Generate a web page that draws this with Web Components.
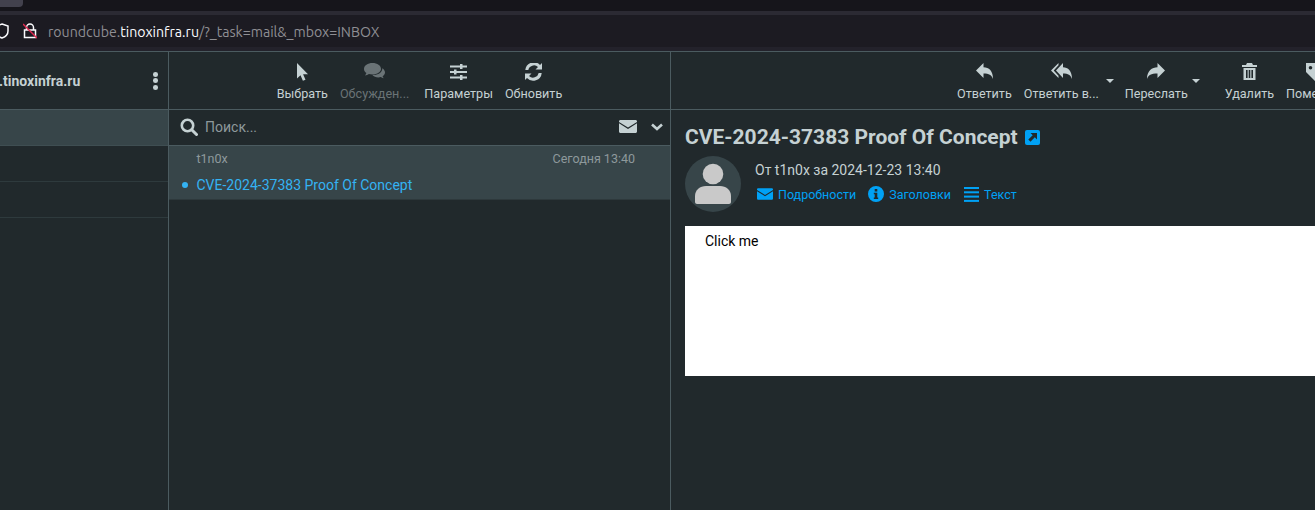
<!DOCTYPE html>
<html>
<head>
<meta charset="utf-8">
<style>
  html, body { margin: 0; height: 100%; overflow: hidden; background: #21292c; }
  body { display: flex; flex-direction: column; width: 1315px; height: 510px; font-family: Roboto, sans-serif; }
</style>
</head>
<body>
<browser-bar></browser-bar>
<mail-layout>
  <folder-pane slot="folders"></folder-pane>
  <list-pane slot="list"></list-pane>
  <message-pane slot="message"></message-pane>
</mail-layout>

<script>
const ICONS = {
  select: `<path fill="currentColor" d="M1 0v15.500l3.500-3.300 2.400 5.600 2.600-1.100-2.400-5.500H12z"/>`,
  threads: `<path fill="currentColor" d="M8.500 0C3.800 0 0 2.600 0 5.900c0 1.600.9 3 2.400 4.100-.2.900-.8 1.700-1.500 2.400 1.500-.1 2.900-.7 4-1.500 1 .3 2.200.5 3.600.5 4.700 0 8.500-2.600 8.500-5.500C17 2.600 13.200 0 8.500 0z"/><path fill="currentColor" d="M18.300 5.200c.1 3.900-4 6.900-9.300 6.900h-.6c1.300 1.400 3.500 2.300 5.900 2.300.9 0 1.700-.1 2.500-.3.800.6 1.800 1 3 1.100-.6-.6-1-1.200-1.200-1.900 1.500-.9 2.400-2.200 2.400-3.700 0-1.800-1.100-3.400-2.700-4.400z"/>`,
  options: `<g fill="currentColor"><rect y="2.500" width="17" height="2"/><rect y="8" width="17" height="2"/><rect y="13.500" width="17" height="2"/><rect x="10" y="1" width="2.500" height="5"/><rect x="4" y="6.500" width="2.500" height="5"/><rect x="10" y="12" width="2.500" height="5"/></g>`,
  refresh: `<path fill="currentColor" d="M17 0v6.500h-6.500L13 4A5.800 5.800 0 0 0 3.300 7H.3A8.500 8.500 0 0 1 15 2zM0 17v-6.500h6.500L4 13a5.800 5.800 0 0 0 9.700-3h3A8.500 8.500 0 0 1 2 15z"/>`,
  reply: `<path fill="currentColor" d="M7.500 0v4.200C13 4.400 17 7.500 17 16c-1.300-3.800-4-5.500-9.500-5.500V15L0 7.500z"/>`,
  replyall: `<path fill="currentColor" d="M12 0v4.200C17 4.400 21 7.500 21 16c-1.300-3.800-3.800-5.500-9-5.500V15L5 7.500z"/><path fill="currentColor" d="M7.500 0 0 7.500 7.500 15v-2.300L2.700 7.500 7.500 2.300z"/>`,
  forward: `<path fill="currentColor" d="M10.500 0v4.200C5 4.400 0 7.500 0 16c1.300-3.800 4-5.500 10.500-5.500V15L18 7.500z"/>`,
  trash: `<path fill="currentColor" d="M5 0h5l1 2h4v2H0V2h4zM1.500 5h12v12h-12zM4 7v8h1.600V7zm2.700 0v8h1.600V7zm2.700 0v8H11V7z"/>`,
  tag: `<path fill="currentColor" d="M0 0h9l10 10-9 9L0 9zm4.500 3A1.800 1.800 0 1 0 4.500 6.600 1.800 1.800 0 0 0 4.500 3z"/>`,
  mail: `<path fill="currentColor" d="M1.500 0h15c.8 0 1.500.6 1.500 1.400v.5L9 7.500 0 1.900v-.5C0 .6.700 0 1.500 0zM0 3.300l9 5.600 9-5.600V11.500c0 .8-.7 1.500-1.500 1.500h-15C.7 13 0 12.300 0 11.500z"/>`,
  info: `<path fill="currentColor" fill-rule="evenodd" d="M8 0a8 8 0 1 1 0 16A8 8 0 0 1 8 0zM6.700 3v2.500h2.600V3zM5.800 6.800v1.500h.9v3.200h-.9V13h4.400v-1.500h-.9V6.800z"/>`,
  text: `<g fill="currentColor"><rect width="15" height="2"/><rect y="4.300" width="15" height="2"/><rect y="8.600" width="15" height="2"/><rect y="12.900" width="15" height="2"/></g>`,
};

// small helper, every element below just renders its own html once
class Base extends HTMLElement {
  render(html) {
    this.attachShadow({ mode: "open" }).innerHTML = html;
  }
}

class BrowserBar extends Base {
  connectedCallback() {
    this.render(`
    <style>
      :host { display: block; height: 52px; flex: none; background: #23222b; box-sizing: border-box; border-bottom: 1px solid #4b5b60; }
      .tabs { height: 11px; background: #16151b; }
      .tab { width: 23px; height: 7px; background: #42414d; border-radius: 0 0 4px 0; }
      .strip { height: 4px; background: #2b2a33; }
      .url { height: 32px; display: flex; align-items: center; background: #1c1b22; font: 14.150px Ubuntu, "Open Sans", sans-serif; color: #8f8f94; }
      .url b { font-weight: 400; color: #fbfbfe; }
      .url span { position: relative; top: 1px; }
      svg { flex: none; display: block; }
      .shield { margin-left: -5px; }
      .lock { margin: 0 11px 0 14px; }
    </style>
    <div class="tabs"><div class="tab"></div></div>
    <div class="strip"></div>
    <div class="url">
      <svg class="shield" width="14" height="16" viewBox="0 0 14 16"><path fill="none" stroke="#fbfbfe" stroke-width="1.500" d="M7 1l6 2v5c0 3.500-2.500 5.800-6 7-3.500-1.200-6-3.500-6-7V3z"/></svg>
      <svg class="lock" width="14" height="16" viewBox="0 0 14 16"><path fill="none" stroke="#fbfbfe" stroke-width="1.500" d="M3.500 7V4.500a3.500 3.500 0 0 1 7 0V7M1.500 7h11v7.500h-11z"/><path stroke="#e22850" stroke-width="1.500" d="M0 1l14 14"/></svg>
      <span>roundcube.<b>tinoxinfra.ru</b>/?_task=mail&amp;_mbox=INBOX</span>
    </div>`);
  }
}

class MailLayout extends Base {
  connectedCallback() {
    this.render(`
    <style>
      :host { display: grid; grid-template-columns: 169px 502px 1fr; flex: 1; min-height: 0; }
    </style>
    <slot name="folders"></slot><slot name="list"></slot><slot name="message"></slot>`);
  }
}

class ToolButton extends Base {
  connectedCallback() {
    const icon = this.getAttribute("icon");
    const w = this.getAttribute("iw") || 17;
    const vb = this.getAttribute("vb") || `0 0 ${w} 18`;
    this.render(`
    <style>
      :host { display: flex; flex-direction: column; align-items: center; position: relative; font-size: 12.600px; color: #c5d1d3; flex: none; white-space: nowrap; }
      :host([disabled]) { color: #6a7376; }
      svg { display: block; margin: 1px 0 5px; height: 18px; width: ${w}px; }
      :host([drop])::after { content: ""; position: absolute; right: var(--drop, -15px); top: 17px; border: 4px solid transparent; border-top: 4px solid #c5d1d3; border-bottom: 0; }
    </style>
    <svg viewBox="${vb}">${ICONS[icon]}</svg><slot></slot>`);
  }
}
customElements.define("tool-button", ToolButton);

class FolderPane extends Base {
  connectedCallback() {
    this.render(`
    <style>
      :host { display: block; border-right: 1px solid #4b5b60; height: 458px; }
      .head { height: 58px; box-sizing: border-box; border-bottom: 1px solid #4b5b60; display: flex; align-items: center; justify-content: space-between; color: #c5d1d3; font-size: 14px; font-weight: 700; }
      .head span { margin-left: -1px; }
      .dots { margin-right: 10px; display: flex; flex-direction: column; gap: 1.500px; }
      .dots i { width: 5.500px; height: 5px; border-radius: 50%; background: #c5d1d3; }
      .row { height: 36px; box-sizing: border-box; border-bottom: 1px solid #2e3a3d; }
      .row.sel { background: #374549; border-bottom-color: #3f4e52; }
    </style>
    <div class="head"><span>.tinoxinfra.ru</span><div class="dots"><i></i><i></i><i></i></div></div>
    <div class="row sel"></div><div class="row"></div><div class="row"></div>`);
  }
}

class ListPane extends Base {
  connectedCallback() {
    this.render(`
    <style>
      :host { display: block; border-right: 1px solid #4b5b60; height: 458px; }
      .tools { height: 58px; box-sizing: border-box; border-bottom: 1px solid #4b5b60; display: flex; justify-content: center; gap: 12px; padding: 10px 0 0 0; }
      .search { height: 36px; box-sizing: border-box; border-bottom: 1px solid #4b5b60; display: flex; align-items: center; padding: 0 7px 2px 11px; color: #8e999c; font-size: 14px; }
      .search span { flex: 1; margin-left: 7px; }
      .search svg { display: block; color: #c5d1d3; }
      .chev { margin-left: 14px; }
      .msg { background: #374549; height: 54px; box-sizing: border-box; border-bottom: 1px solid #2e393c; padding: 5px 35px 0 27.500px; position: relative; }
      .top { display: flex; justify-content: space-between; font-size: 12.500px; color: #8e999c; }
      .subj { margin-top: 11px; font-size: 14px; color: #34b3f3; }
      .dot { position: absolute; left: 13px; top: 36px; width: 6px; height: 6px; border-radius: 50%; background: #34b3f3; }
    </style>
    <div class="tools">
      <tool-button icon="select" iw="12">Выбрать</tool-button>
      <tool-button icon="threads" disabled iw="22">Обсужден...</tool-button>
      <tool-button icon="options" style="margin-left:3px">Параметры</tool-button>
      <tool-button icon="refresh">Обновить</tool-button>
    </div>
    <div class="search">
      <svg width="18" height="18" viewBox="0 0 18 18"><circle cx="7.500" cy="7.500" r="5.700" fill="none" stroke="currentColor" stroke-width="2.600"/><path stroke="currentColor" stroke-width="3" stroke-linecap="round" d="M12 12l4.500 4.500"/></svg>
      <span>Поиск...</span>
      <svg width="18" height="13" viewBox="0 0 18 13">${ICONS.mail}</svg>
      <svg class="chev" width="12" height="8" viewBox="0 0 12 8"><path fill="none" stroke="currentColor" stroke-width="2.600" d="M1 1.500l5 4.500 5-4.500"/></svg>
    </div>
    <div class="msg">
      <div class="top"><span>t1n0x</span><span>Сегодня 13:40</span></div>
      <div class="subj">CVE-2024-37383 Proof Of Concept</div>
      <div class="dot"></div>
    </div>`);
  }
}

class MessagePane extends Base {
  connectedCallback() {
    this.render(`
    <style>
      :host { display: block; height: 458px; overflow: hidden; }
      .tools { height: 58px; box-sizing: border-box; border-bottom: 1px solid #4b5b60; display: flex; padding: 10px 0 0 286px; overflow: hidden; }
      .tools tool-button + tool-button { margin-left: 12px; }
      .body { padding: 13px 0 0 14px; }
      h1 { margin: 0; font-size: 21px; font-weight: 700; color: #c5d1d3; display: flex; align-items: center; gap: 7px; height: 28px; white-space: nowrap; }
      h1 svg { display: block; }
      .head { display: flex; margin-top: 5px; }
      .avatar { width: 56px; height: 56px; border-radius: 50%; background: #374549; flex: none; }
      .avatar svg { display: block; }
      .info { margin: 6px 0 0 14px; }
      .from { font-size: 14px; color: #c5d1d3; }
      .links { display: flex; margin-top: 8px; padding-left: 2px; font-size: 12.500px; color: #00a1f5; align-items: center; }
      .links span { display: flex; align-items: center; margin-right: 12px; }
      .links span + span { margin-right: 13px; }
      .links svg { display: block; margin-right: 5px; }
      .frame { margin-top: 14px; height: 150px; background: #fff; color: #000; font-size: 14px; padding: 7px 20px; box-sizing: border-box; }
    </style>
    <div class="tools">
      <tool-button icon="reply">Ответить</tool-button>
      <tool-button icon="replyall" drop iw="21">Ответить в...</tool-button>
      <tool-button icon="forward" drop iw="18" style="margin-left:26px;--drop:-12px">Переслать</tool-button>
      <tool-button icon="trash" iw="15" style="margin-left:37px">Удалить</tool-button>
      <tool-button icon="tag" iw="19">Пометить</tool-button>
    </div>
    <div class="body">
      <h1>CVE-2024-37383 Proof Of Concept
        <svg width="15" height="15" viewBox="0 0 15 15"><rect width="15" height="15" rx="2" fill="#00a1f5"/><path fill="#21292c" d="M5.500 3H12v6.500L9.800 7.300 5.500 11.800 3.300 9.600 7.700 5.200z"/></svg>
      </h1>
      <div class="head">
        <div class="avatar"><svg width="56" height="56" viewBox="0 0 56 56"><circle cx="28" cy="18" r="10.300" fill="#c9c9c9"/><path fill="#c9c9c9" d="M10 46v-6c0-6 5-10 11-10h14c6 0 11 4 11 10v6c0 1-1 2-2 2H12c-1 0-2-1-2-2z"/></svg></div>
        <div class="info">
          <div class="from">От t1n0x за 2024-12-23 13:40</div>
          <div class="links">
            <span><svg width="16" height="12" viewBox="0 0 18 13">${ICONS.mail}</svg>Подробности</span>
            <span><svg width="16" height="16" viewBox="0 0 16 16">${ICONS.info}</svg>Заголовки</span>
            <span><svg width="15" height="15" viewBox="0 0 15 15">${ICONS.text}</svg>Текст</span>
          </div>
        </div>
      </div>
      <div class="frame">Click me</div>
    </div>`);
  }
}

customElements.define("browser-bar", BrowserBar);
customElements.define("mail-layout", MailLayout);
customElements.define("folder-pane", FolderPane);
customElements.define("list-pane", ListPane);
customElements.define("message-pane", MessagePane);
</script>
</body>
</html>
